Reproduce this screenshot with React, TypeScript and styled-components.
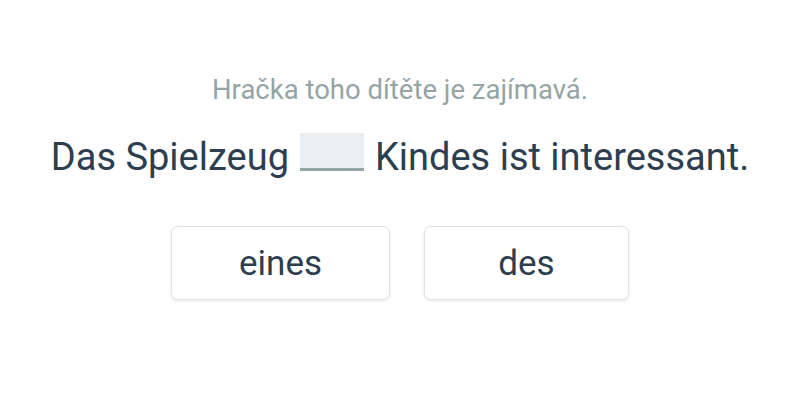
import React from "react";
import styled, { createGlobalStyle } from "styled-components";

const Global = createGlobalStyle`
  html, body { margin: 0; padding: 0; background: #ffffff; }
  body { font-family: Roboto, "Noto Sans", sans-serif; }
`;

const Page = styled.div`
  width: 800px;
  height: 400px;
  display: flex;
  flex-direction: column;
  align-items: center;
  padding-top: 72px;
  box-sizing: border-box;
`;

const Hint = styled.div`
  font-size: 27.5px;
  line-height: 36px;
  color: #95a5a6;
`;

const Sentence = styled.div`
  margin-top: 25px;
  font-size: 38px;
  line-height: 48px;
  color: #2c3e50;
  display: flex;
  align-items: center;
  white-space: pre;
`;

const Blank = styled.span`
  display: inline-block;
  width: 64px;
  height: 35px;
  background: #eceff1;
  border-bottom: 3px solid #95a5a6;
  margin: 0 11px 10px 11px;
`;

const Choices = styled.div`
  margin-top: 45px;
  display: flex;
  gap: 34px;
`;

const Choice = styled.button<{ $w: number }>`
  width: ${(p) => p.$w}px;
  height: 74px;
  background: #ffffff;
  border: 1px solid #e1e4e6;
  border-radius: 7px;
  box-shadow: 0 1px 3px rgba(0, 0, 0, 0.1);
  font-family: Roboto, "Noto Sans", sans-serif;
  font-size: 35px;
  color: #2c3e50;
  cursor: pointer;
  padding: 0;
`;

export default function App() {
  return (
    <>
      <Global />
      <Page>
        <Hint>Hračka toho dítěte je zajímavá.</Hint>
        <Sentence>
          Das Spielzeug<Blank />Kindes ist interessant.
        </Sentence>
        <Choices>
          <Choice $w={219}>eines</Choice>
          <Choice $w={205}>des</Choice>
        </Choices>
      </Page>
    </>
  );
}
